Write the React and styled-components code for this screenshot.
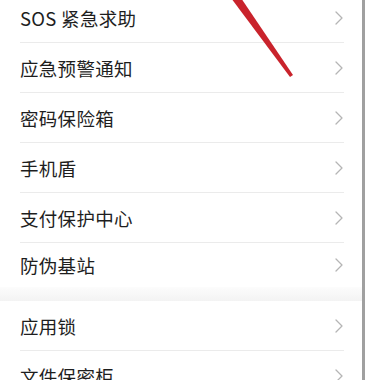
import React from "react";
import styled, { createGlobalStyle } from "styled-components";

const GlobalStyle = createGlobalStyle`
  body {
    margin: 0;
    background: #ffffff;
    font-family: "Noto Sans CJK SC", "Noto Sans", sans-serif;
  }
`;

const groups = [
  ["SOS 紧急求助", "应急预警通知", "密码保险箱", "手机盾", "支付保护中心", "防伪基站"],
  ["应用锁", "文件保密柜"],
];

const Chevron = () => (
  <svg width="10" height="16" viewBox="0 0 10 16">
    <polyline
      points="2,2 8,8 2,14"
      fill="none"
      stroke="#b5b5b5"
      strokeWidth="1.3"
      strokeLinecap="round"
      strokeLinejoin="round"
    />
  </svg>
);

const App = () => {
  return (
    <>
      <GlobalStyle />
      <Screen>
        <Content>
          <List>
            {groups.map((items, g) => (
              <Group key={g}>
                {items.map((label, i) => (
                  <Row key={label} short={g === 0 && i === items.length - 1}>
                    <Label>{label}</Label>
                    <Chevron />
                  </Row>
                ))}
                {g === 0 && <Band />}
              </Group>
            ))}
          </List>
        </Content>
        <ScrollBar />
        <Edge />
        <Arrow width="369" height="90" viewBox="0 0 369 90">
          <polygon points="231,-2 241,-2 293,75 290,77" fill="#c9232c" />
        </Arrow>
      </Screen>
    </>
  );
};

const Screen = styled.div`
  position: relative;
  display: flex;
  height: 380px;
  overflow: hidden;
`;

const Content = styled.div`
  width: 362px;
`;

const List = styled.div`
  margin-top: -7px;
  display: flex;
  flex-direction: column;
`;

const Group = styled.div`
  display: flex;
  flex-direction: column;
`;

const Row = styled.div`
  height: ${(p) => (p.short ? "44px" : "50px")};
  margin: 0 18px 0 20px;
  display: flex;
  align-items: center;
  justify-content: space-between;
  border-bottom: ${(p) => (p.short ? "none" : "1px solid #ebebeb")};
  box-sizing: border-box;
`;

const Label = styled.span`
  font-size: 18.5px;
  color: #1e1e1e;
  letter-spacing: 0.3px;
  margin-top: ${(p) => (p.short ? "4px" : "0")};
`;

const Band = styled.div`
  height: 14px;
  background: linear-gradient(#fcfcfc, #f3f3f3);
`;

const ScrollBar = styled.div`
  width: 3px;
  background: #a0a0a0;
`;

const Edge = styled.div`
  flex: 1;
  background: #ffffff;
`;

const Arrow = styled.svg`
  position: absolute;
  top: 0;
  left: 0;
  pointer-events: none;
`;

export default App;
